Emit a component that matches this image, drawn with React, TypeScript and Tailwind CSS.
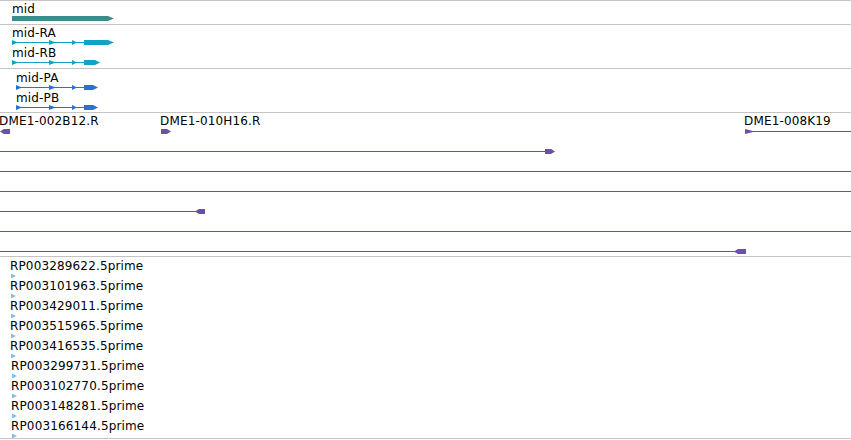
import React from "react";

const PURPLE = "#6b51a3";
const FONT = { fontFamily: '"DejaVu Sans", Verdana, sans-serif' };
const TEXT = "block whitespace-nowrap text-[12px] leading-[14px] tracking-[0.15px] text-black";

type Model = { tris: [number, number][]; start: number; blockStart: number; blockEnd: number; tip: number };

function GeneRow({ label, m, color }: { label: string; m: Model; color: string }) {
  const cy = 2.5;
  return (
    <div className="flex h-[20px] flex-col">
      <span className={TEXT} style={{ paddingLeft: m.start }}>
        {label}
      </span>
      <svg width={851} height={6} className="block">
        <g fill={color}>
          <rect x={m.start} y={2} width={m.blockStart - m.start} height={1} />
          {m.tris.map(([x, w], i) => (
            <polygon key={i} points={`${x},0 ${x + w},${cy} ${x},5`} />
          ))}
          <polygon
            points={`${m.blockStart},0 ${m.blockEnd - m.tip},0 ${m.blockEnd},${cy} ${m.blockEnd - m.tip},5 ${m.blockStart},5`}
          />
        </g>
      </svg>
    </div>
  );
}

function PurpleBlock({ x0, x1, cy, dir }: { x0: number; x1: number; cy: number; dir: "l" | "r" }) {
  const t = cy - 2.5;
  const b = cy + 2.5;
  const pts =
    dir === "r"
      ? `${x0},${t} ${x1 - 4},${t} ${x1},${cy} ${x1 - 4},${b} ${x0},${b}`
      : `${x0},${cy} ${x0 + 4},${t} ${x1},${t} ${x1},${b} ${x0 + 4},${b}`;
  return <polygon points={pts} fill={PURPLE} />;
}

export default function App() {
  const mid: Model = { tris: [], start: 12, blockStart: 12, blockEnd: 114, tip: 6 };
  const ra: Model = { tris: [[12, 6], [49, 7], [72, 5]], start: 12, blockStart: 84, blockEnd: 114, tip: 6 };
  const rb: Model = { tris: [[12, 6], [49, 7], [72, 5]], start: 12, blockStart: 84, blockEnd: 100, tip: 5 };
  const pa: Model = { tris: [[16, 6], [49, 7], [72, 5]], start: 16, blockStart: 84, blockEnd: 98, tip: 5 };

  const rps = [
    "RP003289622.5prime",
    "RP003101963.5prime",
    "RP003429011.5prime",
    "RP003515965.5prime",
    "RP003416535.5prime",
    "RP003299731.5prime",
    "RP003102770.5prime",
    "RP003148281.5prime",
    "RP003166144.5prime",
  ];

  return (
    <div className="flex h-[440px] w-[851px] flex-col overflow-hidden bg-white" style={FONT}>
      {/* Track: gene */}
      <div className="flex h-[24px] flex-col border-t border-[#c4c4c4] pt-[1px]">
        <GeneRow label="mid" m={mid} color="#3d8b8c" />
      </div>

      {/* Track: transcripts */}
      <div className="flex h-[44px] flex-col border-t border-[#c4c4c4] pt-[1px]">
        <GeneRow label="mid-RA" m={ra} color="#0fa3c4" />
        <GeneRow label="mid-RB" m={rb} color="#0fa3c4" />
      </div>

      {/* Track: proteins */}
      <div className="flex h-[44px] flex-col border-t border-[#c4c4c4] pt-[2px]">
        <GeneRow label="mid-PA" m={pa} color="#2f6fd2" />
        <GeneRow label="mid-PB" m={pa} color="#2f6fd2" />
      </div>

      {/* Track: DME1 clones */}
      <div className="flex h-[144px] flex-col border-t border-[#c4c4c4] pt-[1px]">
        <div className="relative h-[13px]">
          <span className={`${TEXT} absolute left-[-1px] top-0`}>DME1-002B12.R</span>
          <span className={`${TEXT} absolute left-[160px] top-0`}>DME1-010H16.R</span>
          <span className={`${TEXT} absolute left-[744px] top-0`}>DME1-008K19</span>
        </div>
        <svg width={851} height={129} className="block">
          {/* row 1 (center y=4.5) */}
          <PurpleBlock x0={0} x1={10} cy={4.5} dir="l" />
          <PurpleBlock x0={161} x1={171} cy={4.5} dir="r" />
          <polygon points="745,2 753,4 753,5 745,7" fill={PURPLE} />
          <rect x={753} y={4} width={98} height={1} fill={PURPLE} />
          {/* row 2 */}
          <rect x={0} y={24} width={545} height={1} fill={PURPLE} />
          <PurpleBlock x0={545} x1={555} cy={24.5} dir="r" />
          {/* rows 3,4 */}
          <rect x={0} y={44} width={851} height={1} fill={PURPLE} />
          <rect x={0} y={64} width={851} height={1} fill={PURPLE} />
          {/* row 5 */}
          <rect x={0} y={84} width={196} height={1} fill={PURPLE} />
          <PurpleBlock x0={195} x1={205} cy={84.5} dir="l" />
          {/* row 6 */}
          <rect x={0} y={104} width={851} height={1} fill={PURPLE} />
          {/* row 7 */}
          <rect x={0} y={124} width={735} height={1} fill={PURPLE} />
          <PurpleBlock x0={734} x1={746} cy={124.5} dir="l" />
        </svg>
      </div>

      {/* Track: RP 5prime */}
      <div className="flex h-[183px] flex-col border-y border-[#c4c4c4] pt-[2px]">
        {rps.map((name, i) => {
          const x = i < 5 ? 11 : 12;
          return (
            <div key={name} className="flex h-[20px] flex-col" style={{ paddingLeft: x }}>
              <span className={`${TEXT} ml-[-1px]`}>{name}</span>
              <svg width={6} height={6} className="block">
                <polygon points="0,0.5 5,3 0,5.5" fill="#8bbbe4" />
              </svg>
            </div>
          );
        })}
      </div>
    </div>
  );
}
